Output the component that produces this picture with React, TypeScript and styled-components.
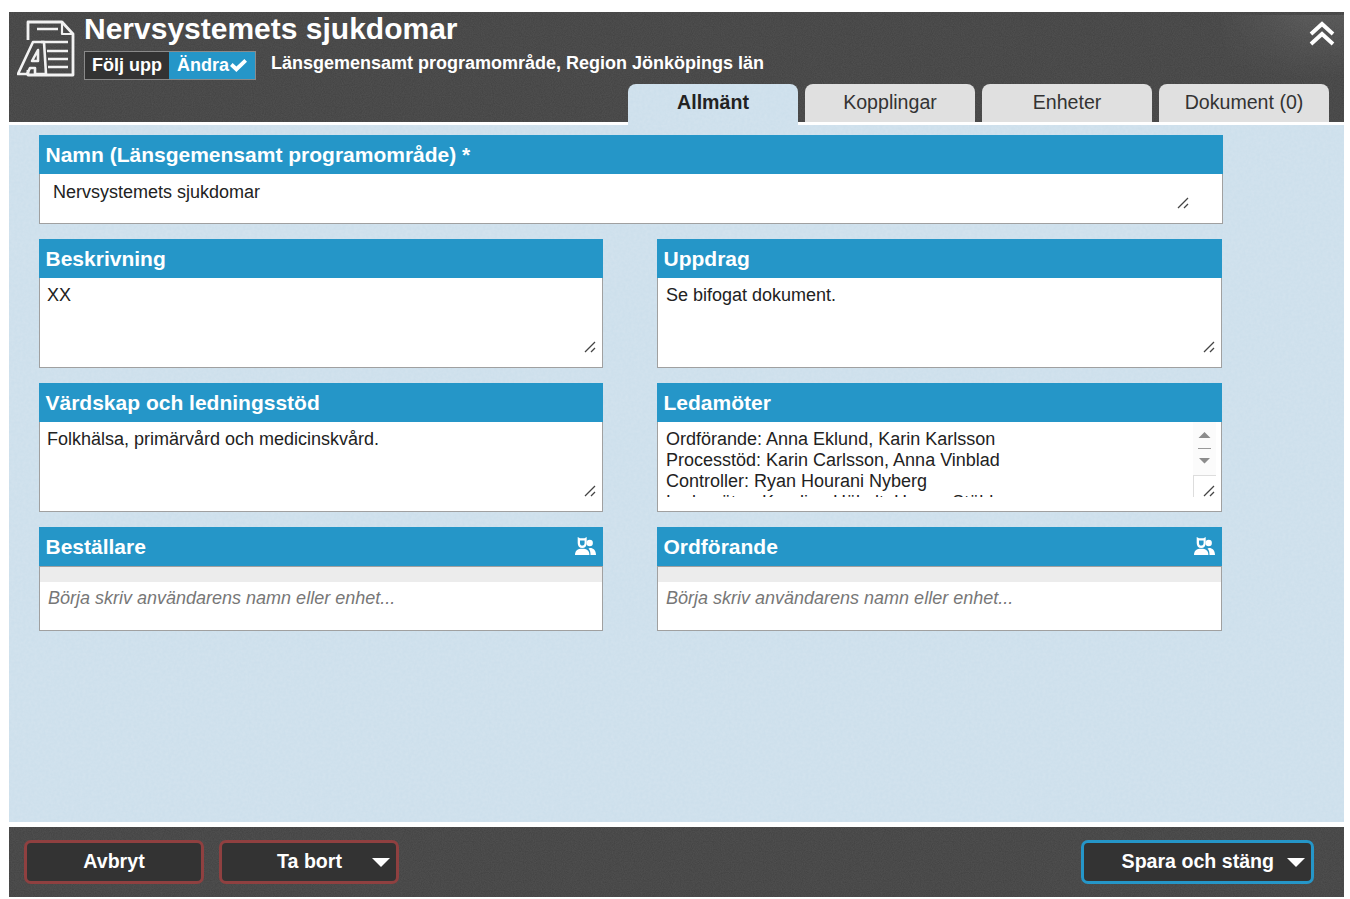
import React from "react";
import styled, { createGlobalStyle } from "styled-components";

const noise = (base: string, a: number, f: number) =>
  `url("data:image/svg+xml,%3Csvg xmlns='http://www.w3.org/2000/svg' width='240' height='240'%3E%3Cfilter id='n'%3E%3CfeTurbulence type='fractalNoise' baseFrequency='${f}' numOctaves='3' stitchTiles='stitch'/%3E%3CfeColorMatrix values='0 0 0 0 ${base} 0 0 0 0 ${base} 0 0 0 0 ${base} 0 0 0 ${a} 0'/%3E%3C/filter%3E%3Crect width='240' height='240' filter='url(%23n)'/%3E%3C/svg%3E")`;

const GlobalStyle = createGlobalStyle`
  html, body {
    margin: 0;
    padding: 0;
    background: #fff;
    font-family: "Liberation Sans", Arial, sans-serif;
  }
`;

const Page = styled.div`
  width: 1350px;
  height: 899px;
  box-sizing: border-box;
  padding: 12px 6px 2px 9px;
  display: flex;
  flex-direction: column;
  overflow: hidden;
`;

const Header = styled.header`
  height: 110px;
  flex: none;
  display: flex;
  flex-direction: column;
  position: relative;
  background-color: #525252;
  background-image: ${noise("0", 0.2, 0.9)};
`;

const HeaderTop = styled.div`
  display: flex;
  align-items: flex-start;
  height: 72px;
  padding-left: 8px;
`;

const Logo = styled.svg`
  width: 60px;
  height: 60px;
  margin-top: 8px;
  flex: none;
`;

const TitleColumn = styled.div`
  margin-left: 7px;
  display: flex;
  flex-direction: column;
`;

const Title = styled.h1`
  margin: 0;
  height: 36px;
  line-height: 34px;
  font-size: 30px;
  font-weight: 700;
  color: #fff;
  white-space: nowrap;
`;

const SubRow = styled.div`
  display: flex;
  align-items: center;
  margin-top: 3px;
`;

const Toggle = styled.div`
  display: flex;
  height: 27px;
  border: 1px solid #8a8a8a;
`;

const ToggleItem = styled.div<{ $active?: boolean }>`
  display: flex;
  align-items: center;
  width: ${(p) => (p.$active ? "86px" : "84px")};
  box-sizing: border-box;
  padding-left: ${(p) => (p.$active ? "8px" : "7px")};
  font-size: 18px;
  font-weight: 700;
  color: #fff;
  background: ${(p) => (p.$active ? "#2596c8" : "#333")};
`;

const Subtitle = styled.div`
  margin-left: 15px;
  margin-top: -5px;
  font-size: 18px;
  font-weight: 700;
  color: #fff;
  white-space: nowrap;
`;

const CollapseGlow = styled.div`
  position: absolute;
  top: 3px;
  right: 0;
  width: 130px;
  height: 64px;
  background: linear-gradient(to bottom, rgba(255, 255, 255, 0.09), rgba(255, 255, 255, 0));
  mask-image: linear-gradient(to right, transparent, #000 70%);
`;

const Collapse = styled.svg`
  position: absolute;
  top: 9px;
  right: 9px;
  width: 26px;
  height: 26px;
`;

const Tabs = styled.nav`
  display: flex;
  justify-content: flex-end;
  gap: 7px;
  padding-right: 15px;
  margin-top: auto;
`;

const Tab = styled.div<{ $active?: boolean }>`
  width: 170px;
  height: ${(p) => (p.$active ? "41px" : "38px")};
  margin-bottom: ${(p) => (p.$active ? "-3px" : "0")};
  box-sizing: border-box;
  border-radius: 8px 8px 0 0;
  display: flex;
  align-items: center;
  justify-content: center;
  padding-bottom: ${(p) => (p.$active ? "4px" : "1px")};
  font-size: 19.6px;
  font-weight: ${(p) => (p.$active ? 700 : 400)};
  color: ${(p) => (p.$active ? "#222" : "#333")};
  background-color: ${(p) => (p.$active ? "#cbdeeb" : "#e0e0e0")};
  background-image: ${(p) => (p.$active ? noise("1", 0.16, 0.35) : "none")};
  position: relative;
`;

const Content = styled.main`
  margin-top: 3px;
  height: 697px;
  flex: none;
  box-sizing: border-box;
  padding: 10px 0 0 30px;
  background-color: #cbdeeb;
  background-image: ${noise("1", 0.16, 0.35)};
`;

const FormGrid = styled.div`
  display: grid;
  grid-template-columns: 564px 565px;
  column-gap: 54px;
  row-gap: 15px;
  align-items: start;
`;

const Panel = styled.section<{ $wide?: boolean }>`
  ${(p) => (p.$wide ? "grid-column: 1 / -1; margin-right: -1px;" : "")}
  box-sizing: border-box;
  background: #fff;
  border: 1px solid #a0a0a0;
  border-top: none;
  position: relative;
`;

const PanelHead = styled.div`
  height: 39px;
  margin: 0 -1px;
  padding: 0 7px 0 6.5px;
  background: #2596c8;
  color: #fff;
  font-size: 21px;
  font-weight: 700;
  display: flex;
  align-items: center;
  justify-content: space-between;
  white-space: nowrap;
`;

const PanelText = styled.div<{ $wide?: boolean; $right?: boolean; $h: number }>`
  height: ${(p) => p.$h}px;
  box-sizing: border-box;
  overflow: hidden;
  padding: ${(p) => (p.$wide ? "8px" : "7px")} 0 0 ${(p) => (p.$wide ? "13px" : p.$right ? "8px" : "7px")};
  font-size: 18px;
  line-height: 21px;
  color: #222;
  white-space: pre-line;
`;

const Grip = styled.svg<{ $wide?: boolean }>`
  position: absolute;
  right: ${(p) => (p.$wide ? "33px" : "6px")};
  bottom: 14px;
  width: 12px;
  height: 12px;
`;

const ScrollRail = styled.div`
  position: absolute;
  right: 5px;
  top: 39px;
  width: 23px;
  height: 75px;
  display: flex;
  flex-direction: column;
  background: #fbfbfb;
`;

const ScrollArrows = styled.svg`
  width: 23px;
  height: 53px;
  flex: none;
`;

const ScrollCorner = styled.div`
  flex: 1;
  background: #fff;
  border-top: 1px solid #ddd;
  border-left: 1px solid #ddd;
`;

const ScrollPad = styled.div`
  height: 14px;
`;

const LookupBand = styled.div`
  height: 15px;
  background: #ececec;
  border-top: 1px solid #a0a0a0;
`;

const LookupInput = styled.div`
  height: 48px;
  box-sizing: border-box;
  padding: 6px 0 0 8px;
  font-size: 18px;
  line-height: 21px;
  font-style: italic;
  color: #777;
`;

const UsersIcon = styled.svg`
  width: 21px;
  height: 18px;
  margin-bottom: 2px;
  flex: none;
`;

const Footer = styled.footer`
  margin-top: 5px;
  height: 70px;
  flex: none;
  box-sizing: border-box;
  padding: 13px 30px 0 15px;
  display: flex;
  align-items: flex-start;
  gap: 15px;
  background-color: #525252;
  background-image: ${noise("0", 0.2, 0.9)};
`;

const ActionButton = styled.button<{ $primary?: boolean; $w: number; $menu?: boolean }>`
  width: ${(p) => p.$w}px;
  height: 44px;
  box-sizing: border-box;
  border: 3px solid ${(p) => (p.$primary ? "#2596c8" : "#8f4040")};
  border-radius: 7px;
  background: #333;
  color: #fff;
  font-family: inherit;
  font-size: 19.6px;
  font-weight: 700;
  display: flex;
  align-items: center;
  justify-content: ${(p) => (p.$menu ? "flex-end" : "center")};
  padding: 0 ${(p) => (p.$menu ? "6px" : "0")} 2px 0;
  margin-left: ${(p) => (p.$primary ? "auto" : "0")};
`;

const Caret = styled.span<{ $gap: number }>`
  width: 0;
  height: 0;
  margin-left: ${(p) => p.$gap}px;
  margin-top: 3px;
  border-left: 9px solid transparent;
  border-right: 9px solid transparent;
  border-top: 9px solid #fff;
`;

const LogoMark = () => (
  <Logo viewBox="0 0 60 60" fill="none" stroke="#f2f2f2" strokeLinejoin="round">
    <path strokeWidth="2.8" d="M11 20 V2 H45 L56 14 V55 H15 M11 50 V55 H15" />
    <path strokeWidth="2.2" d="M45 2 V14 H56" />
    <path strokeWidth="2.6" d="M20 9 H41 M24 22 H51 M30 31 H51 M31 39 H51 M31 47 H51" />
    <path strokeWidth="2.6" d="M1 54 L16 22 H27 L29 54 H18 V48 H13 L10 54 Z M15 41 L21 30 V41 Z" />
  </Logo>
);

const Users = () => (
  <UsersIcon viewBox="0 0 21 18" fill="#fff">
    <circle cx="14.7" cy="6" r="3.2" />
    <path d="M15 11 C18.5 11 21 13.5 21 18 H15.5 C15.5 15 15 13 13.5 11.6 Z" />
    <path
      fillRule="evenodd"
      d="M2.7 0 L5 1.2 H9.5 L11.7 0 V6 C11.7 9 10 11 7.2 11 C4.4 11 2.7 9 2.7 6 Z M5 3.4 V6 C5 7.8 6 8.6 7.2 8.6 C8.4 8.6 9.6 7.8 9.6 6 V3.4 Z"
    />
    <path d="M0 18 C0 13.5 2.6 11.7 7.2 11.7 C11.8 11.7 14.4 13.5 14.4 18 Z" />
  </UsersIcon>
);

const ResizeGrip = ({ wide }: { wide?: boolean }) => (
  <Grip $wide={wide} viewBox="0 0 12 12" stroke="#444" strokeWidth="1.3">
    <path d="M1 11 L11 1 M7 11 L11 7" />
  </Grip>
);

const textPanels = [
  { key: "beskrivning", title: "Beskrivning", text: "XX" },
  { key: "uppdrag", title: "Uppdrag", text: "Se bifogat dokument.", right: true },
  { key: "vardskap", title: "Värdskap och ledningsstöd", text: "Folkhälsa, primärvård och medicinskvård." },
];

const lookups = ["Beställare", "Ordförande"];

export default function App() {
  return (
    <>
      <GlobalStyle />
      <Page>
        <Header>
          <HeaderTop>
            <LogoMark />
            <TitleColumn>
              <Title>Nervsystemets sjukdomar</Title>
              <SubRow>
                <Toggle>
                  <ToggleItem>Följ upp</ToggleItem>
                  <ToggleItem $active>
                    Ändra
                    <svg width="19" height="15" viewBox="0 0 19 15" fill="#fff">
                      <path d="M1 8 L3.6 5 L7.4 8.6 L15.4 1 L18 3.8 L7.4 14 Z" />
                    </svg>
                  </ToggleItem>
                </Toggle>
                <Subtitle>Länsgemensamt programområde, Region Jönköpings län</Subtitle>
              </SubRow>
            </TitleColumn>
          </HeaderTop>
          <CollapseGlow />
          <Collapse viewBox="0 0 26 26" fill="none" stroke="#fff" strokeWidth="3.9">
            <path d="M2 13 L13 3 L24 13 M2 23 L13 13 L24 23" />
          </Collapse>
          <Tabs>
            <Tab $active>Allmänt</Tab>
            <Tab>Kopplingar</Tab>
            <Tab>Enheter</Tab>
            <Tab>Dokument (0)</Tab>
          </Tabs>
        </Header>
        <Content>
          <FormGrid>
            <Panel $wide>
              <PanelHead>Namn (Länsgemensamt programområde) *</PanelHead>
              <PanelText $wide $h={49}>Nervsystemets sjukdomar</PanelText>
              <ResizeGrip wide />
            </Panel>
            {textPanels.map((p) => (
              <Panel key={p.key}>
                <PanelHead>{p.title}</PanelHead>
                <PanelText $right={p.right} $h={89}>{p.text}</PanelText>
                <ResizeGrip />
              </Panel>
            ))}
            <Panel>
              <PanelHead>Ledamöter</PanelHead>
              <PanelText $right $h={75}>
                {"Ordförande: Anna Eklund, Karin Karlsson\nProcesstöd: Karin Carlsson, Anna Vinblad\nController: Ryan Hourani Nyberg\nLedamöter: Karolina Hökelt, Hanna Stähl"}
              </PanelText>
              <ScrollRail>
                <ScrollArrows viewBox="0 0 23 53">
                  <path d="M5.5 16 L11.5 10 L17.5 16 Z M6 36 L11.5 41.5 L17 36 Z" fill="#8c8c8c" />
                  <path d="M5 26.5 H18" stroke="#999" />
                </ScrollArrows>
                <ScrollCorner />
              </ScrollRail>
              <ResizeGrip />
              <ScrollPad />
            </Panel>
            {lookups.map((title) => (
              <Panel key={title}>
                <PanelHead>
                  {title}
                  <Users />
                </PanelHead>
                <LookupBand />
                <LookupInput>Börja skriv användarens namn eller enhet...</LookupInput>
              </Panel>
            ))}
          </FormGrid>
        </Content>
        <Footer>
          <ActionButton $w={180}>Avbryt</ActionButton>
          <ActionButton $w={180} $menu>
            Ta bort
            <Caret $gap={30} />
          </ActionButton>
          <ActionButton $w={233} $primary $menu>
            Spara och stäng
            <Caret $gap={13} />
          </ActionButton>
        </Footer>
      </Page>
    </>
  );
}
